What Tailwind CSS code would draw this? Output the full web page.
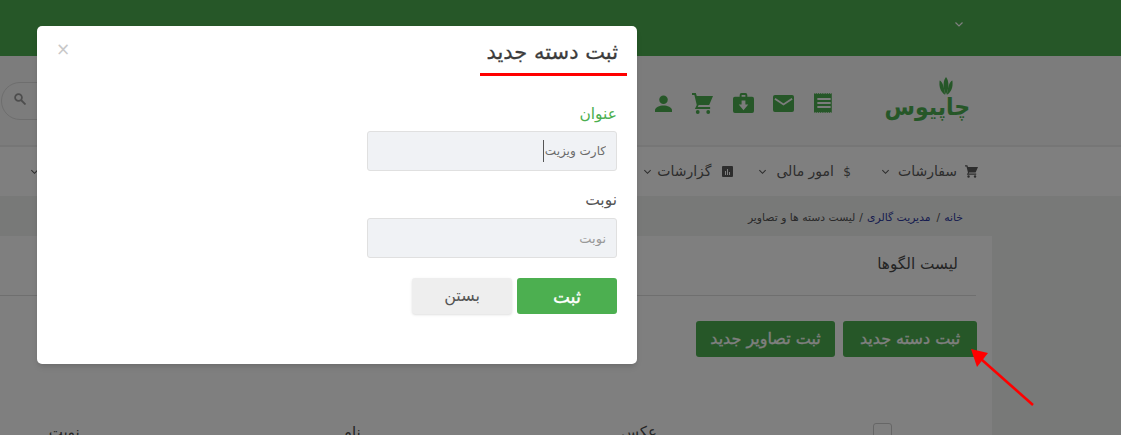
<!DOCTYPE html>
<html lang="fa" dir="rtl">
<head>
<meta charset="utf-8">
<script src="https://cdn.jsdelivr.net/npm/@tailwindcss/browser@4"></script>
</head>
<body class="m-0 overflow-hidden">
<div class="relative w-[1121px] h-[435px] overflow-hidden bg-[#f0f2f1] font-['DejaVu_Sans',sans-serif] text-[#4a4a4a]">
  <!-- top bar -->
  <div class="h-[56px] bg-[#4caf50] flex items-center pr-[157px] pb-[8px]">
    <svg class="w-[10px] h-[10px] text-white" viewBox="0 0 10 10" fill="none" stroke="currentColor" stroke-width="1.2"><path d="M1.5 3.5 5 7l3.500-3.500"/></svg>
  </div>
  <!-- header -->
  <div class="h-[89px] bg-[#f8f8f8] flex items-center pr-[151px] pt-[5px]">
    <div class="relative w-[84px] h-[48px] text-[#4caf50] shrink-0">
      <svg class="absolute left-[50px] top-[-2px] w-[20px] h-[19px]" viewBox="0 0 22 16" preserveAspectRatio="none" fill="currentColor"><path d="M11 0c3 3 4 8 0 15-4-7-3-12 0-15z"/><path d="M4 3c3 1 5 5 6 12C5 13 3 8 4 3z"/><path d="M18 3c-3 1-5 5-6 12 5-2 7-7 6-12z"/></svg>
      <span class="absolute right-0 top-[13px] origin-right scale-x-[0.92] text-[24px] leading-[30px] font-bold whitespace-nowrap">چاپیوس</span>
    </div>
    <div class="flex items-center gap-[20px] mr-[52px] text-[#4caf50]">
      <svg class="w-[20px] h-[20px]" viewBox="0 0 18 20" preserveAspectRatio="none" fill="currentColor"><path fill-rule="evenodd" d="M0 0l1 1 1-1 1 1 1-1 1 1 1-1 1 1 1-1 1 1 1-1 1 1 1-1 1 1 1-1 1 1 1-1v20l-1-1-1 1-1-1-1 1-1-1-1 1-1-1-1 1-1-1-1 1-1-1-1 1-1-1-1 1-1-1-1 1zM3 5v2h12V5zM3 9v2h12V9zM3 13v2h12v-2z"/></svg>
      <svg class="w-[21px] h-[17px]" viewBox="0 0 22 18" preserveAspectRatio="none" fill="currentColor"><path d="M2 0h18a2 2 0 0 1 2 2v14a2 2 0 0 1-2 2H2a2 2 0 0 1-2-2V2a2 2 0 0 1 2-2z"/><path d="M2 4l9 6 9-6" fill="none" stroke="#f8f8f8" stroke-width="2"/></svg>
      <svg class="w-[21px] h-[20px] -mr-[1px]" viewBox="0 0 22 21" preserveAspectRatio="none" fill="currentColor"><path fill-rule="evenodd" d="M7 4V2a2 2 0 0 1 2-2h4a2 2 0 0 1 2 2v2h5a2 2 0 0 1 2 2v13a2 2 0 0 1-2 2H2a2 2 0 0 1-2-2V6a2 2 0 0 1 2-2zM9 2v2h4V2zM9 8v4H6l5 6 5-6h-3V8z"/></svg>
      <svg class="w-[21px] h-[21px]" viewBox="0 0 22 21" preserveAspectRatio="none" fill="currentColor"><path d="M0 0h4l1 3h17l-4 9H7l-1 2h13v2H3l2-4L2.500 2H0z"/><circle cx="6" cy="19" r="2"/><circle cx="17" cy="19" r="2"/></svg>
      <svg class="w-[17px] h-[17px]" viewBox="0 0 18 18" fill="currentColor"><circle cx="9" cy="5" r="4.500"/><path d="M0 18v-2c0-3 5-5 9-5s9 2 9 5v2z"/></svg>
    </div>
    <div class="mr-auto ml-[1px] -mt-[5px] w-[300px] h-[38px] rounded-[19px] border border-[#dcdcdc] flex items-center justify-end pl-[12px] pb-[3px]">
      <svg class="w-[12px] h-[12px] text-[#9a9a9a]" viewBox="0 0 12 12" fill="none" stroke="currentColor" stroke-width="1.800"><circle cx="4.500" cy="4.500" r="3.400"/><path d="M7 7l4.500 4.500"/></svg>
    </div>
  </div>
  <!-- nav -->
  <div class="h-[51px] bg-white border-t-[2px] border-[#ececec] flex items-center pr-[143px] text-[14px] text-[#5a5a5a]">
    <div class="flex items-center gap-[8px]">
      <svg class="w-[13px] h-[13px]" viewBox="0 0 22 21" fill="currentColor"><path d="M0 0h4l1 3h17l-4 9H7l-1 2h13v2H3l2-4L2.500 2H0z"/><circle cx="6" cy="19" r="2"/><circle cx="17" cy="19" r="2"/></svg>
      <span>سفارشات</span>
      <svg class="w-[9px] h-[9px]" viewBox="0 0 10 10" fill="none" stroke="currentColor" stroke-width="1.200"><path d="M1.500 3.500 5 7l3.500-3.500"/></svg>
    </div>
    <div class="flex items-center gap-[8px] mr-[29px]">
      <span class="text-[12px] w-[10px] text-center">$</span>
      <span>امور مالی</span>
      <svg class="w-[9px] h-[9px] mr-[1px]" viewBox="0 0 10 10" fill="none" stroke="currentColor" stroke-width="1.200"><path d="M1.500 3.500 5 7l3.500-3.500"/></svg>
    </div>
    <div class="flex items-center mr-[25px]">
      <svg class="w-[11px] h-[11px]" viewBox="0 0 11 11" fill="currentColor"><path fill-rule="evenodd" d="M1 0h9a1 1 0 0 1 1 1v9a1 1 0 0 1-1 1H1a1 1 0 0 1-1-1V1a1 1 0 0 1 1-1zM3 5v4h1V5zM5 3v6h1V3zM7 6v3h1V6z"/></svg>
      <span class="mr-[11px]">گزارشات</span>
      <svg class="w-[9px] h-[9px] mr-[5px]" viewBox="0 0 10 10" fill="none" stroke="currentColor" stroke-width="1.200"><path d="M1.500 3.500 5 7l3.500-3.500"/></svg>
    </div>
    <svg class="w-[9px] h-[9px] mr-[604px]" viewBox="0 0 10 10" fill="none" stroke="currentColor" stroke-width="1.200"><path d="M1.500 3.500 5 7l3.500-3.500"/></svg>
  </div>
  <!-- breadcrumb -->
  <div class="h-[40px] pr-[158px] flex items-center gap-[4px] text-[10.800px] text-[#555] pt-[4px]">
    <span class="text-[#2f3aa0]">خانه</span><span>/</span>
    <span class="text-[#2f3aa0] mr-[2px]">مدیریت گالری</span><span>/</span>
    <span>لیست دسته ها و تصاویر</span>
  </div>
  <!-- card -->
  <div class="w-[992px] ml-auto mr-[129px] h-[199px] bg-white">
    <div class="mr-[16px] h-[60px] border-b border-[#dfdfdf] pt-[18px] text-[15.300px] pr-[18px] leading-[20px]">لیست الگوها</div>
    <div class="flex gap-[8px] mt-[25px] mr-[15px]">
      <button class="w-[134px] h-[36px] bg-[#4caf50] text-white rounded-[3px] text-[16px] [-webkit-text-stroke:0.3px_white]">ثبت دسته جدید</button>
      <button class="w-[139px] h-[36px] bg-[#4caf50] text-white rounded-[3px] text-[16px] [-webkit-text-stroke:0.3px_white]">ثبت تصاویر جدید</button>
    </div>
    <div class="flex items-center mt-[65px] text-[15px] leading-[20px]">
      <span class="w-[19px] h-[19px] border border-[#ccc] rounded-[3px] mr-[100px]"></span>
      <span class="mr-[216px]">عکس</span>
      <span class="mr-[260px]">نام</span>
      <span class="mr-[263px]">نوبت</span>
    </div>
  </div>
  <!-- overlay -->
  <div class="absolute inset-0 bg-black/50"></div>
  <!-- modal -->
  <div class="absolute left-[37px] top-[26px] w-[600px] h-[338px] bg-white rounded-[5px] shadow-md px-[20px]">
    <span class="absolute left-[19px] top-[14px] text-[17px] leading-[18px] text-[#c8c8c8]">×</span>
    <div class="mr-[-10px] w-[147px] h-[50px] border-b-[3px] border-[#ff0000] pr-[9px] pt-[13px] text-[21px] leading-[26px] text-[#3c3c3c] [-webkit-text-stroke:0.3px_#3c3c3c] whitespace-nowrap">ثبت دسته جدید</div>
    <div class="w-[250px] mt-[26px] text-[15.500px]">
      <label class="block h-[29px] leading-[24px] text-[#4caf50]">عنوان</label>
      <div class="relative">
        <input dir="rtl" class="w-full h-[40px] bg-[#f0f2f5] border border-[#e0e0e0] rounded-[3px] px-[10px] text-[12px] text-[#6b6b6b] outline-none font-['DejaVu_Sans',sans-serif]" value="کارت ویزیت">
        <span class="absolute left-[176px] top-[9px] w-[1px] h-[22px] bg-[#555]"></span>
      </div>
      <label class="block h-[30px] mt-[17px] leading-[24px] text-[#555]">نوبت</label>
      <input dir="rtl" class="block w-full h-[40px] bg-[#f0f2f5] border border-[#e0e0e0] rounded-[3px] px-[10px] text-[13px] outline-none placeholder:text-[#999] font-['DejaVu_Sans',sans-serif]" placeholder="نوبت">
      <div class="flex gap-[5px] mt-[20px]">
        <button class="w-[100px] h-[36px] bg-[#4caf50] text-white rounded-[3px] text-[18px] [-webkit-text-stroke:0.3px_white]">ثبت</button>
        <button class="w-[100px] h-[36px] bg-[#eeeeee] text-[#555] rounded-[3px] text-[16px] shadow-sm">بستن</button>
      </div>
    </div>
  </div>
  <!-- annotation arrow -->
  <svg class="absolute left-[965px] top-[345px] w-[75px] h-[65px]" viewBox="0 0 75 65"><path d="M68 60 16 14" stroke="#ff0000" stroke-width="2.500" fill="none"/><path d="M6 4 23 8 12 22z" fill="#ff0000"/></svg>
</div>
</body>
</html>
